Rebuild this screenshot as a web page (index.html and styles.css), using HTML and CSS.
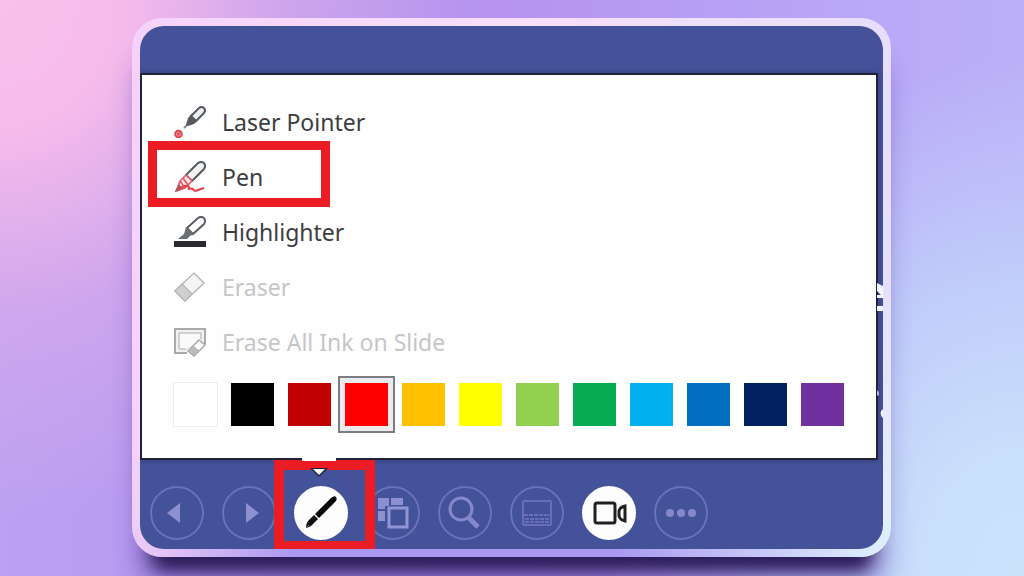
FILE: index.html
```html
<!DOCTYPE html>
<html lang="en">
<head>
<meta charset="utf-8">
<meta name="viewport" content="width=device-width, initial-scale=1">
<title>Slide show pen menu</title>
<link rel="stylesheet" href="styles.css">
</head>
<body>
<main class="frame">
  <div class="screen">
    <section class="menu" aria-label="Pen options">
      <ul class="tools">
        <li><button class="tool" type="button">
          <svg class="tool-icon" viewBox="0 0 32 32" fill="none"><path d="M10 22l7-7" stroke="#888" stroke-width="2"/><path d="M12 19l2-7 5-5 6 6-5 5-6 2z" fill="#555a60"/><path d="M17 10l8-8q3-2 5 0 2 2 0 5l-8 8z" stroke="#555a60" stroke-width="2" fill="#eee"/><path d="M17 9l6 6-4 3-5-4z" fill="#555a60"/><circle cx="4.500" cy="28" r="3.500" fill="#f08088" stroke="#dc3b47" stroke-width="1.500"/><path d="M3 26.500l3 3m0-3l-3 3" stroke="#c44b53"/></svg>
          <span>Laser Pointer</span></button></li>
        <li class="marked"><button class="tool" type="button">
          <svg class="tool-icon" viewBox="0 0 32 32" fill="none"><path d="M12 14L24 2q4-2 6 0 2 3 0 6L18 20z" fill="#f2f2f3" stroke="#555a60" stroke-width="2"/><path d="M12 14l-6 6-4 10 9-3 7-7z" fill="#fbe4e5" stroke="#e06069" stroke-width="1.500"/><path d="M6 20l5 7M9 17l5 7" stroke="#e5505a" stroke-width="1.500"/><path d="M1 31l4-8 4 5z" fill="#a75c60"/><path d="M5 28q6-4 9-3 2 1 0 3 3-1 5 0 1 3 5 1l6-2" stroke="#e5404b" stroke-width="2"/></svg>
          <span>Pen</span></button></li>
        <li><button class="tool" type="button">
          <svg class="tool-icon" viewBox="0 0 32 32" fill="none"><path d="M13 12L24 2q3-2 6 0 2 3 0 6L19 18z" stroke="#5b5f64" stroke-width="2" fill="#fff"/><path d="M12 11l8 7-4 2-3 3H4l6-5z" fill="#6d7074"/><path d="M0 25h32v6H0z" fill="#292a2d"/></svg>
          <span>Highlighter</span></button></li>
        <li><button class="tool" type="button" disabled>
          <svg class="tool-icon" viewBox="0 0 32 32" fill="none" stroke="#b9b9bb" stroke-width="1.500"><path d="M1 20L20 2l10 10-19 18z" fill="#f4f4f4"/><path d="M1 20l7-7 10 10-7 7z" fill="#cfcfd0"/></svg>
          <span>Eraser</span></button></li>
        <li><button class="tool" type="button" disabled>
          <svg class="tool-icon" viewBox="0 0 32 32" fill="none" stroke="#aaaaad" stroke-width="2"><path d="M13 27H1V3h30v15" fill="#f1f1f2"/><path d="M12 23H5V7h22v6" fill="#fafafa" stroke-width="1"/><path d="M14 25l11-11 6 5-11 11z" fill="#fff" stroke-width="1.500"/><path d="M14 25l5-5 6 5-5 5z" fill="#bbb" stroke-width="1"/></svg>
          <span>Erase All Ink on Slide</span></button></li>
      </ul>
      <div class="swatches" role="radiogroup" aria-label="Ink color">
        <label class="swatch"><input class="white" type="radio" name="ink" aria-label="White"></label>
        <label class="swatch"><input class="black" type="radio" name="ink" aria-label="Black"></label>
        <label class="swatch"><input class="dark-red" type="radio" name="ink" aria-label="Dark red"></label>
        <label class="swatch"><input class="red" type="radio" name="ink" aria-label="Red" checked></label>
        <label class="swatch"><input class="orange" type="radio" name="ink" aria-label="Orange"></label>
        <label class="swatch"><input class="yellow" type="radio" name="ink" aria-label="Yellow"></label>
        <label class="swatch"><input class="lime" type="radio" name="ink" aria-label="Light green"></label>
        <label class="swatch"><input class="green" type="radio" name="ink" aria-label="Green"></label>
        <label class="swatch"><input class="sky" type="radio" name="ink" aria-label="Light blue"></label>
        <label class="swatch"><input class="blue" type="radio" name="ink" aria-label="Blue"></label>
        <label class="swatch"><input class="navy" type="radio" name="ink" aria-label="Dark blue"></label>
        <label class="swatch"><input class="purple" type="radio" name="ink" aria-label="Purple"></label>
      </div>
    </section>
    <svg class="slide-edge" viewBox="0 0 6 140" fill="#f4f4ff" aria-hidden="true"><path d="M0 0l6 3v12H0v-3h4L0 8zM0 23h6v5H0z"/><path d="M0 107l2 2v3l-2 1z" fill="#a9b0dd"/><path d="M6 126q-5 4 0 9z"/></svg>
    <nav class="toolbar" aria-label="Slide show controls">
      <button class="round" type="button" aria-label="Previous"><svg viewBox="0 0 54 54"><path d="M17 27l13-10v20z" fill="#8c8fd0"/></svg></button>
      <button class="round" type="button" aria-label="Next"><svg viewBox="0 0 54 54"><path d="M37 27L24 17v20z" fill="#8c8fd0"/></svg></button>
      <div class="pen-slot">
        <button class="round lit" type="button" aria-label="Pen tools"><svg viewBox="0 0 54 54"><path d="M12 42q0-6 4-9l4-4 4 4-4 4q-3 4-8 5z" fill="#111"/><path d="M21 28l15-15q4-4 6-2 2 3-2 6L25 32z" fill="#050505"/><path d="M12 42l3-3" stroke="#777"/></svg></button>
        <svg class="pointer" viewBox="0 0 34 20" aria-hidden="true"><path d="M0 0h34v4H0z" fill="#fff"/><path d="M8 11h18l-9 9z" fill="#202040"/><path d="M11 12h12l-6 6z" fill="#fff"/></svg>
      </div>
      <button class="round" type="button" aria-label="See all slides"><svg viewBox="0 0 54 54"><path d="M12 12h11v8h-4v3h-7zM25 12h12v7H25zM12 25h7v10h-7z" fill="#8c8fd0"/><path d="M23 22h18v19H23z" fill="none" stroke="#9295d3" stroke-width="3"/></svg></button>
      <button class="round" type="button" aria-label="Zoom"><svg viewBox="0 0 54 54" fill="none" stroke="#8588ca"><circle cx="23" cy="23" r="11" stroke-width="3"/><path d="M30 31l10 10" stroke-width="5"/></svg></button>
      <button class="round" type="button" aria-label="Subtitles"><svg viewBox="0 0 54 54" fill="none" stroke="#686fb8" stroke-width="2"><rect x="13" y="15" width="28" height="24" rx="1"/><path d="M14 29h26M15 33h24M15 36h24" stroke-dasharray="4 1"/></svg></button>
      <button class="round lit" type="button" aria-label="Camera"><svg viewBox="0 0 54 54" fill="none" stroke="#202022" stroke-width="3"><rect x="13" y="17" width="20" height="20" rx="2"/><path d="M37 25q1-4 6-5v15q-5-1-6-5z"/></svg></button>
      <button class="round" type="button" aria-label="More options"><svg viewBox="0 0 54 54" fill="#8588ca"><circle cx="16" cy="27" r="4"/><circle cx="27" cy="27" r="4"/><circle cx="38" cy="27" r="4"/></svg></button>
    </nav>
  </div>
</main>
</body>
</html>
```
FILE: styles.css
```css
*,
*::before,
*::after {
  box-sizing: border-box;
}

body {
  margin: 0;
  min-height: 100vh;
  padding: 18px 25px 18px 24px;
  overflow: hidden;
  font-family: "Noto Sans", "Open Sans", sans-serif;
  background:
    radial-gradient(ellipse 40% 90% at 100% 100%, #cbe4fc 0%, #c9dffb 25%, #c0cbfa 60%, rgba(185, 180, 248, 0) 100%),
    radial-gradient(ellipse 46% 90% at 0% 0%, #f9c0ec 0%, #f6bbeb 25%, rgba(212, 168, 236, 0.8) 60%, rgba(190, 162, 242, 0) 100%),
    linear-gradient(90deg, #bba1f2 0%, #b799ef 20%, #b593ee 50%, #b9a9f7 85%, #bbaff8 100%);
}

.frame {
  max-width: 759px;
  margin: 0 auto;
  padding: 8px;
  border-radius: 30px;
  background:
    radial-gradient(circle at 100% 100%, #e0f2fd 0%, rgba(220, 235, 253, 0) 30%),
    radial-gradient(circle at 0% 100%, #f0cdf8 0%, rgba(236, 205, 248, 0) 18%),
    linear-gradient(rgba(169, 152, 240, 0) 94%, #a998f0 98%),
    linear-gradient(90deg, #f6d2fb 0%, #f7dffa 50%, #e6defc 100%);
  box-shadow:
    0 36px 16px -26px #2b1c5c,
    0 28px 18px -18px #46366e,
    0 40px 28px -8px rgba(91, 64, 170, 0.35),
    0 30px 24px -4px rgba(91, 64, 170, 0.2);
}

.screen {
  position: relative;
  padding-top: 47px;
  border-radius: 24px;
  overflow: hidden;
  background: #435299;
}

.menu {
  margin-right: 5px;
  padding: 20px 24px 25px 25px;
  border: 2px solid #202238;
  background: #fefefe;
  box-shadow: 0 0 5px #343c75;
}

.tools {
  margin: 0;
  padding: 0;
  list-style: none;
}

.marked {
  position: relative;
}

.marked::after {
  content: "";
  position: absolute;
  top: -9px;
  left: -19px;
  width: 182px;
  height: 66px;
  border: 9px solid #ec1c24;
  pointer-events: none;
}

.tool {
  display: flex;
  align-items: center;
  gap: 16px;
  width: 100%;
  height: 55px;
  padding: 0 7px 2px;
  border: 0;
  background: none;
  color: #3c3d41;
  font: inherit;
  font-size: 23px;
  text-align: left;
}

.tool:disabled {
  color: #c6c6c8;
}

.tool-icon {
  width: 32px;
  height: 32px;
}

.swatches {
  display: flex;
  flex-wrap: wrap;
  margin-top: 6px;
}

.swatch {
  display: grid;
  place-items: center;
  width: 57px;
  height: 57px;
}

.swatch:has(:checked) {
  border: 2px solid #7c7c82;
  background: #ececef;
}

.swatch input {
  appearance: none;
  width: 43px;
  height: 43px;
  margin: 0;
}

.swatch .white {
  width: 45px;
  height: 45px;
  border: 1px solid #eeeaee;
  background: #ffffff;
}

.black { background: #000000; }
.dark-red { background: #c00000; }
.red { background: #ff0000; }
.orange { background: #ffc000; }
.yellow { background: #ffff00; }
.lime { background: #92d050; }
.green { background: #04ab50; }
.sky { background: #02b0f2; }
.blue { background: #0270c0; }
.navy { background: #002060; }
.purple { background: #7030a0; }

.slide-edge {
  position: absolute;
  top: 257px;
  right: 0;
  width: 6px;
  height: 140px;
}

.toolbar {
  display: flex;
  flex-wrap: wrap;
  gap: 18px;
  padding: 26px 10px 9px;
}

.round {
  display: block;
  width: 54px;
  height: 54px;
  padding: 0;
  border: 2px solid #6a72b8;
  border-radius: 50%;
  background: none;
}

.round svg {
  display: block;
  width: 54px;
  height: 54px;
  margin: -2px;
}

.lit {
  border-color: #fdfdfd;
  background: #fdfdfd;
}

.pen-slot {
  position: relative;
}

.pen-slot::after {
  content: "";
  position: absolute;
  top: -26px;
  left: -20px;
  z-index: 1;
  width: 101px;
  height: 89px;
  border: solid #ec1c24;
  border-width: 10px 10px 8px;
  pointer-events: none;
}

.pointer {
  position: absolute;
  top: -29px;
  left: 8px;
  z-index: 2;
  width: 34px;
  height: 20px;
}
```
